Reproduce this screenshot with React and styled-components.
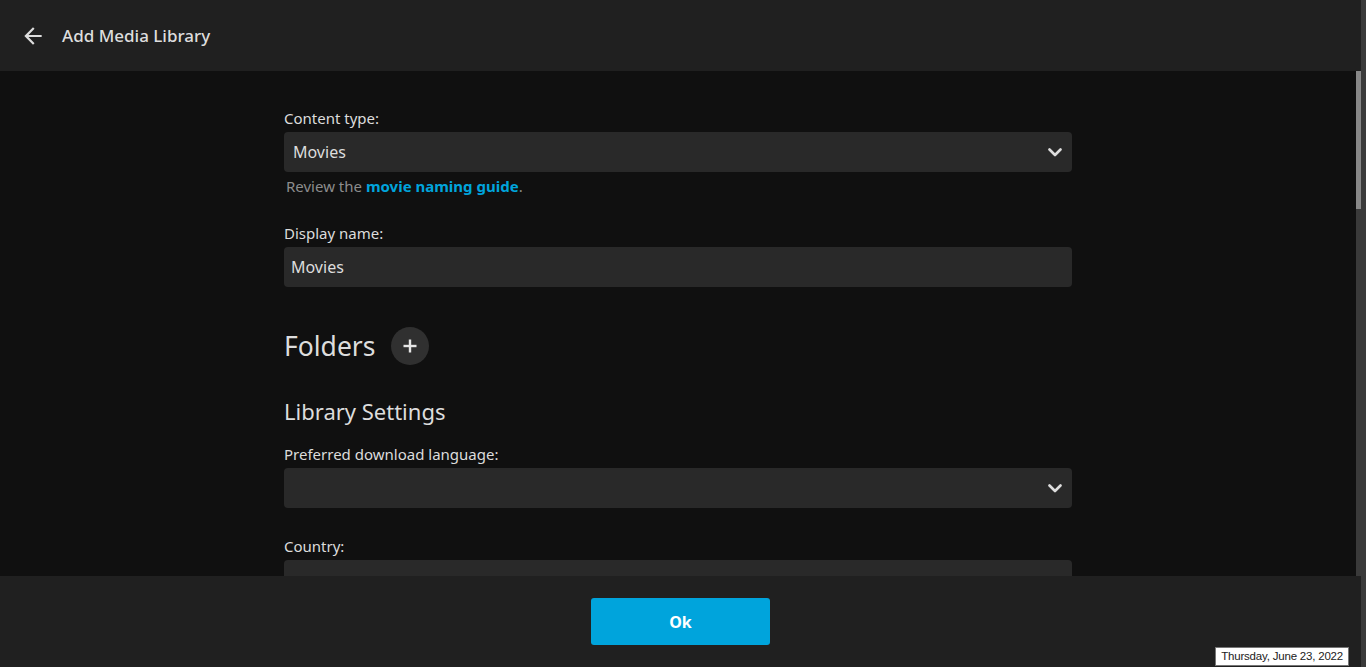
import React from 'react';
import styled, { createGlobalStyle } from 'styled-components';

const GlobalStyle = createGlobalStyle`
  * {
    box-sizing: border-box;
  }

  html, body {
    margin: 0;
    padding: 0;
    height: 100%;
    background-color: #101010;
    overflow: hidden;
  }

  body {
    font-family: 'Noto Sans', 'Open Sans', sans-serif;
    color: #dddddd;
  }

  #root {
    height: 100%;
  }
`;

function BackIcon() {
  return (
    <svg width="26" height="26" viewBox="0 0 24 24" fill="currentColor">
      <path d="M20 11H7.83l5.59-5.59L12 4l-8 8 8 8 1.41-1.41L7.83 13H20v-2z" />
    </svg>
  );
}

function Chevron() {
  return (
    <svg width="14" height="9" viewBox="0 0 14 9" fill="none">
      <polyline
        points="1.5,1.5 7,7 12.5,1.5"
        stroke="#dddddd"
        strokeWidth="2.6"
        strokeLinecap="round"
        strokeLinejoin="round"
      />
    </svg>
  );
}

function PlusIcon() {
  return (
    <svg width="14" height="14" viewBox="0 0 14 14">
      <rect x="5.8" y="0.5" width="2.4" height="13" fill="#e6e6e6" />
      <rect x="0.5" y="5.8" width="13" height="2.4" fill="#e6e6e6" />
    </svg>
  );
}

function SelectField({ label, value }) {
  return (
    <Field>
      <Label>{label}</Label>
      <SelectBox>
        <span>{value}</span>
        <Chevron />
      </SelectBox>
    </Field>
  );
}

export default function App() {
  return (
    <>
      <GlobalStyle />
      <Page>
        <Main>
          <Header>
            <BackButton>
              <BackIcon />
            </BackButton>
            <Title>Add Media Library</Title>
          </Header>

          <ScrollArea>
            <Content>
              <Form>
                <Field helper>
                  <Label>Content type:</Label>
                  <SelectBox>
                    <span>Movies</span>
                    <Chevron />
                  </SelectBox>
                  <Helper>
                    Review the <a href="#guide">movie naming guide</a>.
                  </Helper>
                </Field>

                <Field>
                  <Label>Display name:</Label>
                  <TextInput defaultValue="Movies" />
                </Field>

                <FolderRow>
                  <FolderTitle>Folders</FolderTitle>
                  <RoundButton>
                    <PlusIcon />
                  </RoundButton>
                </FolderRow>

                <SectionTitle>Library Settings</SectionTitle>

                <SelectField label="Preferred download language:" value="" />
                <SelectField label="Country:" value="" />
              </Form>
            </Content>
            <ScrollTrack>
              <ScrollThumb />
            </ScrollTrack>
          </ScrollArea>

          <Footer>
            <OkButton>Ok</OkButton>
          </Footer>
        </Main>
        <EdgeStrip />
      </Page>
      <DateTip>Thursday, June 23, 2022</DateTip>
    </>
  );
}

const Page = styled.div`
  display: flex;
  height: 100vh;
  width: 100%;
`;

const Main = styled.div`
  flex: 1;
  display: flex;
  flex-direction: column;
  min-width: 0;
`;

const EdgeStrip = styled.div`
  width: 5px;
  background-color: #3a3a3a;
`;

const Header = styled.header`
  display: flex;
  align-items: center;
  height: 71px;
  flex-shrink: 0;
  padding-left: 20px;
  background-color: #202020;
`;

const BackButton = styled.div`
  display: flex;
  align-items: center;
  justify-content: center;
  width: 26px;
  height: 26px;
  margin-right: 16px;
  color: #dddddd;
`;

const Title = styled.h1`
  margin: 0;
  font-size: 17px;
  font-weight: 500;
  color: #dddddd;
`;

const ScrollArea = styled.div`
  flex: 1;
  display: flex;
  min-height: 0;
  background-color: #101010;
`;

const Content = styled.div`
  flex: 1;
  overflow: hidden;
`;

const ScrollTrack = styled.div`
  width: 5px;
  background-color: #3a3a3a;
`;

const ScrollThumb = styled.div`
  height: 138px;
  background-color: #888888;
`;

const Form = styled.div`
  width: 788px;
  margin: 0 auto;
  padding-top: 37px;
`;

const Field = styled.div`
  margin-bottom: ${props => (props.helper ? '27px' : '28px')};
`;

const Label = styled.label`
  display: block;
  height: 20px;
  margin-bottom: 4px;
  font-size: 15px;
  line-height: 20px;
  color: #dcdcdc;
`;

const SelectBox = styled.div`
  display: flex;
  align-items: center;
  justify-content: space-between;
  height: 40px;
  padding: 0 10px 0 9px;
  border-radius: 4px;
  background-color: #292929;
  font-size: 16px;
  color: #dddddd;
`;

const TextInput = styled.input`
  display: block;
  width: 100%;
  height: 40px;
  padding: 0 7px;
  border: none;
  border-radius: 4px;
  background-color: #292929;
  font-family: 'Noto Sans', 'Open Sans', sans-serif;
  font-size: 16px;
  color: #dddddd;
  outline: none;
`;

const Helper = styled.div`
  margin-top: 4px;
  padding-left: 2px;
  font-size: 15px;
  line-height: 20px;
  color: #8c8c8c;

  a {
    color: #00a4dc;
    font-weight: 700;
    text-decoration: none;
  }
`;

const FolderRow = styled.div`
  display: flex;
  align-items: center;
  gap: 15px;
  margin-top: 40px;
  margin-bottom: 30px;
`;

const FolderTitle = styled.h2`
  margin: 0;
  font-size: 26.5px;
  font-weight: 400;
  line-height: 38px;
  color: #dddddd;
`;

const RoundButton = styled.div`
  display: flex;
  align-items: center;
  justify-content: center;
  width: 38px;
  height: 38px;
  border-radius: 50%;
  background-color: #303030;
`;

const SectionTitle = styled.h3`
  margin: 0 0 17px;
  font-size: 22px;
  font-weight: 400;
  line-height: 32px;
  color: #dddddd;
`;

const Footer = styled.footer`
  display: flex;
  justify-content: center;
  align-items: flex-start;
  height: 91px;
  flex-shrink: 0;
  padding-top: 22px;
  background-color: #202020;
`;

const OkButton = styled.button`
  width: 179px;
  height: 47px;
  border: none;
  border-radius: 3px;
  background-color: #00a4dc;
  font-family: 'Noto Sans', 'Open Sans', sans-serif;
  font-size: 16px;
  font-weight: 700;
  color: #ffffff;
  cursor: pointer;
`;

const DateTip = styled.div`
  position: fixed;
  right: 17px;
  bottom: 1px;
  height: 19px;
  padding: 0 5px;
  border: 1px solid #767676;
  background-color: #ffffff;
  font-family: 'Liberation Sans', Arial, sans-serif;
  font-size: 11.5px;
  line-height: 17px;
  letter-spacing: -0.2px;
  color: #222222;
  white-space: nowrap;
`;
